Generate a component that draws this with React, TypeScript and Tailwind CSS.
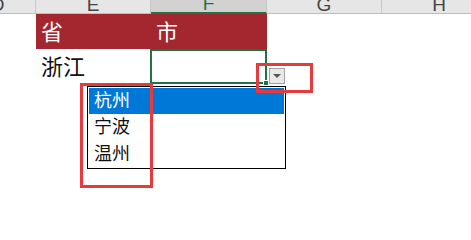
const font = { fontFamily: '"Liberation Sans", "Noto Sans CJK SC", sans-serif' };

const cols = [
  { label: "D", w: "w-[76px] -ml-[40px]" },
  { label: "E", w: "w-[115px]" },
  { label: "F", w: "w-[116px]", active: true },
  { label: "G", w: "w-[115px]" },
  { label: "H", w: "w-[115px]" },
];

export default function App() {
  return (
    <div className="relative w-[471px] h-[240px] overflow-hidden bg-white" style={font}>
      {/* column headers */}
      <div className="flex h-[14px] overflow-hidden">
        {cols.map((c) => (
          <div
            key={c.label}
            className={`${c.w} shrink-0 flex justify-center items-end border-r border-[#c8c8c8] ${
              c.active ? "bg-[#d2d2d2] border-b-2 border-b-[#217346] text-[#217346]" : "bg-[#e6e6e6] border-b border-b-[#bdbdbd] text-[#444]"
            }`}
          >
            <span className="text-[19px] leading-none translate-y-[1px]">{c.label}</span>
          </div>
        ))}
      </div>

      {/* row 1 */}
      <div className="flex h-[35px]">
        <div className="w-[36px] shrink-0" />
        <div className="w-[115px] shrink-0 bg-[#a4262f] text-white text-[22px] leading-none flex items-center pl-[5px] pt-[2px]">省</div>
        <div className="w-[116px] shrink-0 bg-[#a4262f] text-white text-[22px] leading-none flex items-center pl-[5px] pt-[2px]">市</div>
      </div>

      {/* row 2 */}
      <div className="flex h-[35px]">
        <div className="w-[36px] shrink-0" />
        <div className="w-[115px] shrink-0 text-[#111] text-[22px] leading-none flex items-center pl-[5px] pt-[2px]">浙江</div>
        <div className="w-[117px] shrink-0 -ml-px border-2 border-[#217346] relative">
          <div className="absolute -right-[4px] -bottom-[4px] w-[6px] h-[6px] bg-[#217346] border border-white" />
        </div>
      </div>

      {/* dropdown button */}
      <div className="absolute left-[269px] top-[68px] w-[16px] h-[16px] bg-[#e9e9e9] border border-[#a0a0a0] flex items-center justify-center">
        <svg width="8" height="5" viewBox="0 0 8 5">
          <path d="M0 0 L8 0 L4 4 Z" fill="#555" />
        </svg>
      </div>

      {/* dropdown list */}
      <div className="absolute left-[87px] top-[86px] w-[199px] h-[83px] bg-white border border-black p-px text-[18px] leading-[27px] text-[#111]">
        <div className="bg-[#0078d7] text-white pl-[5px] h-[26px] leading-[26px]">杭州</div>
        <div className="pl-[5px]">宁波</div>
        <div className="pl-[5px]">温州</div>
      </div>

      {/* annotation boxes */}
      <div className="absolute left-[80px] top-[83px] w-[73px] h-[105px] border-[3px] border-[#e8393c]" />
      <div className="absolute left-[256px] top-[63px] w-[57px] h-[30px] border-[3px] border-[#e8393c]" />
    </div>
  );
}
